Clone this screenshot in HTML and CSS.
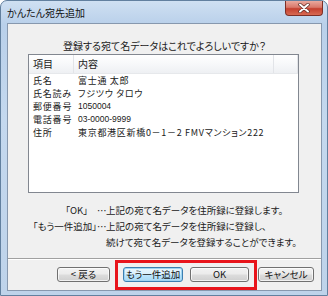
FILE: index.html
```html
<!DOCTYPE html>
<html lang="ja">
<head>
    <meta charset="UTF-8">
    <title>かんたん宛先追加</title>
    <link rel="stylesheet" href="styles.css">
</head>
<body>

<div class="window">
    <div class="titlebar">
        <span class="title">かんたん宛先追加</span>
        <button class="close-btn" aria-label="閉じる">
            <svg width="14" height="10" viewBox="0 0 14 10">
                <path d="M3 1.5 L11 8.5 M11 1.5 L3 8.5" stroke="#5a2a24" stroke-width="3.4" stroke-linecap="round"/>
                <path d="M3 1.5 L11 8.5 M11 1.5 L3 8.5" stroke="#fff" stroke-width="2" stroke-linecap="round"/>
            </svg>
        </button>
    </div>

    <div class="client">
        <p class="question">登録する宛て名データはこれでよろしいですか？</p>

        <!-- 確認リスト -->
        <div class="listbox">
            <div class="list-header">
                <span class="col-item">項目</span>
                <span class="col-value">内容</span>
                <span class="col-fill"></span>
            </div>
            <div class="list-row"><span class="col-item">氏名</span><span class="col-value">富士通 太郎</span></div>
            <div class="list-row"><span class="col-item">氏名読み</span><span class="col-value">フジツウ タロウ</span></div>
            <div class="list-row"><span class="col-item">郵便番号</span><span class="col-value num">1050004</span></div>
            <div class="list-row"><span class="col-item">電話番号</span><span class="col-value num">03-0000-9999</span></div>
            <div class="list-row"><span class="col-item">住所</span><span class="col-value">東京都港区新橋0－1－2 FMVマンション222</span></div>
        </div>

        <div class="notes">
            <span class="note-label label-ok">「OK」</span>
            <span class="note-dots">…</span>
            <span>上記の宛て名データを住所録に登録します。</span>
            <span class="note-label">「もう一件追加」</span>
            <span class="note-dots">…</span>
            <span>上記の宛て名データを住所録に登録し、<br>続けて宛て名データを登録することができます。</span>
        </div>

        <div class="separator"></div>

        <div class="button-row">
            <button class="btn btn-back">&lt; 戻る</button>
            <button class="btn btn-more focused">もう一件追加</button>
            <button class="btn btn-ok">OK</button>
            <button class="btn btn-cancel">キャンセル</button>
        </div>

        <div class="highlight"></div>
    </div>
</div>

</body>
</html>
```

FILE: styles.css
```css
body {
    margin: 0;
    font-family: "Noto Sans CJK JP", sans-serif;
    font-size: 10px;
    font-feature-settings: "palt";
    color: #1a1a1a;
    background-color: #fff;
}
.window {
    width: 328px;
    height: 296px;
    box-sizing: border-box;
    padding: 0 5px 0 6px;
    border: 1px solid #62809f;
    border-radius: 7px 7px 0 0;
    background: linear-gradient(180deg, #cfe0f2 0%, #b9d0ea 8%, #c4d8ee 40%, #bed3ea 100%);
}
.titlebar {
    height: 22px;
    display: flex;
    justify-content: space-between;
    align-items: flex-start;
}
.title {
    padding-top: 5px;
    line-height: 14px;
    font-size: 10px;
    color: #111;
}
.close-btn {
    width: 38px;
    height: 15px;
    margin: 0 -1px 0 0;
    padding: 0;
    display: flex;
    align-items: center;
    justify-content: center;
    border: 1px solid #7d2f26;
    border-top: none;
    border-radius: 0 0 4px 4px;
    background: linear-gradient(180deg, #e9a99e 0%, #d9786a 45%, #c4402f 55%, #d86a52 100%);
}
.client {
    position: relative;
    height: 268px;
    box-sizing: border-box;
    border: 1px solid #8798ae;
    background-color: #f0f0f0;
}
.question {
    margin: 15px 0 0;
    line-height: 13px;
    text-align: center;
}
.listbox {
    margin: 2px 0 0 20px;
    width: 271px;
    height: 139px;
    box-sizing: border-box;
    border: 1px solid #828790;
    background-color: #fff;
}
.list-header {
    display: flex;
    height: 18px;
    line-height: 18px;
    border-bottom: 1px solid #e6e8eb;
    background: linear-gradient(180deg, #ffffff 0%, #f7f8fa 50%, #eef0f3 100%);
}
.list-header span {
    border-right: 1px solid #e2e4e8;
}
.list-row {
    display: flex;
    height: 13px;
    line-height: 13px;
    font-size: 9px;
    white-space: nowrap;
}
.col-item {
    width: 45px;
    box-sizing: border-box;
    padding-left: 4px;
}
.list-row .col-item {
    letter-spacing: 0.8px;
}
.col-value {
    width: 200px;
    box-sizing: border-box;
    padding-left: 4px;
}
.list-row .col-value {
    letter-spacing: 0.7px;
}
.col-fill {
    flex: 1;
}
.list-row .num {
    font-family: "Liberation Sans", sans-serif;
    font-size: 8.5px;
    letter-spacing: 0;
}
.notes {
    margin-top: 9px;
    display: grid;
    grid-template-columns: 89px 9px 1fr;
    font-size: 9.5px;
    line-height: 16px;
    white-space: nowrap;
}
.note-label {
    text-align: right;
}
.label-ok {
    padding-right: 9px;
}
.note-dots {
    text-align: center;
    align-self: start;
}
.separator {
    margin-top: 8px;
    border-top: 1px solid #a0a0a0;
    border-bottom: 1px solid #fff;
}
.button-row {
    display: flex;
    margin-top: 7px;
    padding-left: 49px;
}
.btn {
    height: 15px;
    padding: 0;
    font-family: inherit;
    font-size: 9.5px;
    font-feature-settings: "palt";
    line-height: 13px;
    white-space: nowrap;
    color: #111;
    border: 1px solid #707070;
    border-radius: 3px;
    background: linear-gradient(180deg, #f2f2f2 0%, #ebebeb 49%, #dddddd 51%, #cfcfcf 100%);
    box-shadow: inset 0 0 0 1px rgba(255, 255, 255, 0.7);
}
.btn-back { width: 53px; }
.btn-more { width: 60px; margin-left: 13px; }
.btn-ok { width: 59px; margin-left: 7px; }
.btn-cancel { width: 56px; margin-left: 9px; }
.btn.focused {
    border-color: #3c7fb1;
    background: linear-gradient(180deg, #eaf6fd 0%, #d9f0fc 49%, #bee6fd 51%, #a7d9f5 100%);
    box-shadow: inset 0 0 0 1px #9fd4f2;
}
.highlight {
    position: absolute;
    left: 107px;
    top: 236px;
    width: 142px;
    height: 30px;
    box-sizing: border-box;
    border: 3px solid #e8141b;
}
```
